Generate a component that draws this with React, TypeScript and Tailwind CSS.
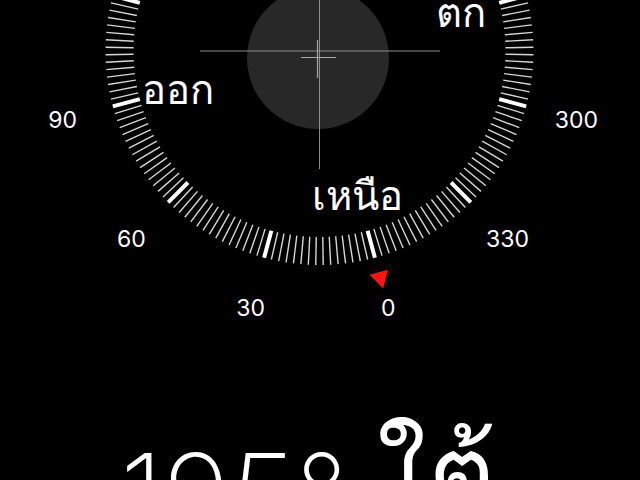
import React from 'react';

// dial centre and current heading (top of screen points at HEADING)
const CX = 319.5;
const CY = 51;
const HEADING = 195;

const ticks = Array.from({ length: 180 }, (_, i) => i * 2);
const numbers = [0, 30, 60, 90, 120, 150, 180, 210, 240, 270, 300, 330];
const cardinals = [
	{ deg: 0, label: 'เหนือ', dy: 3 },
	{ deg: 90, label: 'ออก', dy: 0 },
	{ deg: 180, label: 'ใต้', dy: 0 },
	{ deg: 270, label: 'ตก', dy: 0 },
];

const polar = (deg: number, r: number) => {
	const a = ((deg - HEADING) * Math.PI) / 180;
	return { x: CX + r * Math.sin(a), y: CY - r * Math.cos(a) };
};

const Dial = () => (
	<svg width={640} height={420} viewBox="0 0 640 420" className="block shrink-0">
		<circle cx={318} cy={58} r={71} fill="#282828" />
		<line x1={200} y1={51} x2={440} y2={51} stroke="#8c8c8c" strokeWidth={1} />
		<line x1={319.5} y1={-69} x2={319.5} y2={169} stroke="#8c8c8c" strokeWidth={1} />
		<line x1={301} y1={57.5} x2={336} y2={57.5} stroke="#a8a8a8" strokeWidth={1.2} />
		<line x1={317.5} y1={40} x2={317.5} y2={78} stroke="#a8a8a8" strokeWidth={1.2} />

		<g transform={`translate(${CX} ${CY}) rotate(${-HEADING})`}>
			{ticks.map((b) => {
				const major = b % 30 === 0;
				return (
					<line
						key={b}
						transform={`rotate(${b})`}
						x1={0}
						y1={-214}
						x2={0}
						y2={-186}
						stroke={major ? '#ffffff' : '#d6d6d6'}
						strokeWidth={major ? 4 : 1.4}
					/>
				);
			})}
			{/* north marker */}
			<polygon points="-9.5,-229 9.5,-229 0,-246" fill="#ff1414" />
		</g>

		{numbers.map((n) => {
			const p = polar(n, 266);
			return (
				<text
					key={n}
					x={p.x}
					y={p.y}
					textAnchor="middle"
					dominantBaseline="central"
					className="fill-white text-[23px]">
					{n}
				</text>
			);
		})}

		{cardinals.map((c) => {
			const p = polar(c.deg, 147);
			return (
				<text
					key={c.deg}
					x={p.x}
					y={p.y + c.dy}
					textAnchor="middle"
					dominantBaseline="central"
					className="fill-white text-[40px]">
					{c.label}
				</text>
			);
		})}
	</svg>
);

const App = () => {
	return (
		<div className="flex flex-col w-[640px] h-[480px] overflow-hidden bg-black text-white font-['Inter',sans-serif]">
			<Dial />
			<div className="flex items-start pl-[120px] whitespace-nowrap">
				<p className="mt-[18px] text-[114px] leading-none font-extralight">195°</p>
				<p className="ml-[29px] text-[104px] leading-none">ใต้</p>
			</div>
		</div>
	);
};

export default App;
